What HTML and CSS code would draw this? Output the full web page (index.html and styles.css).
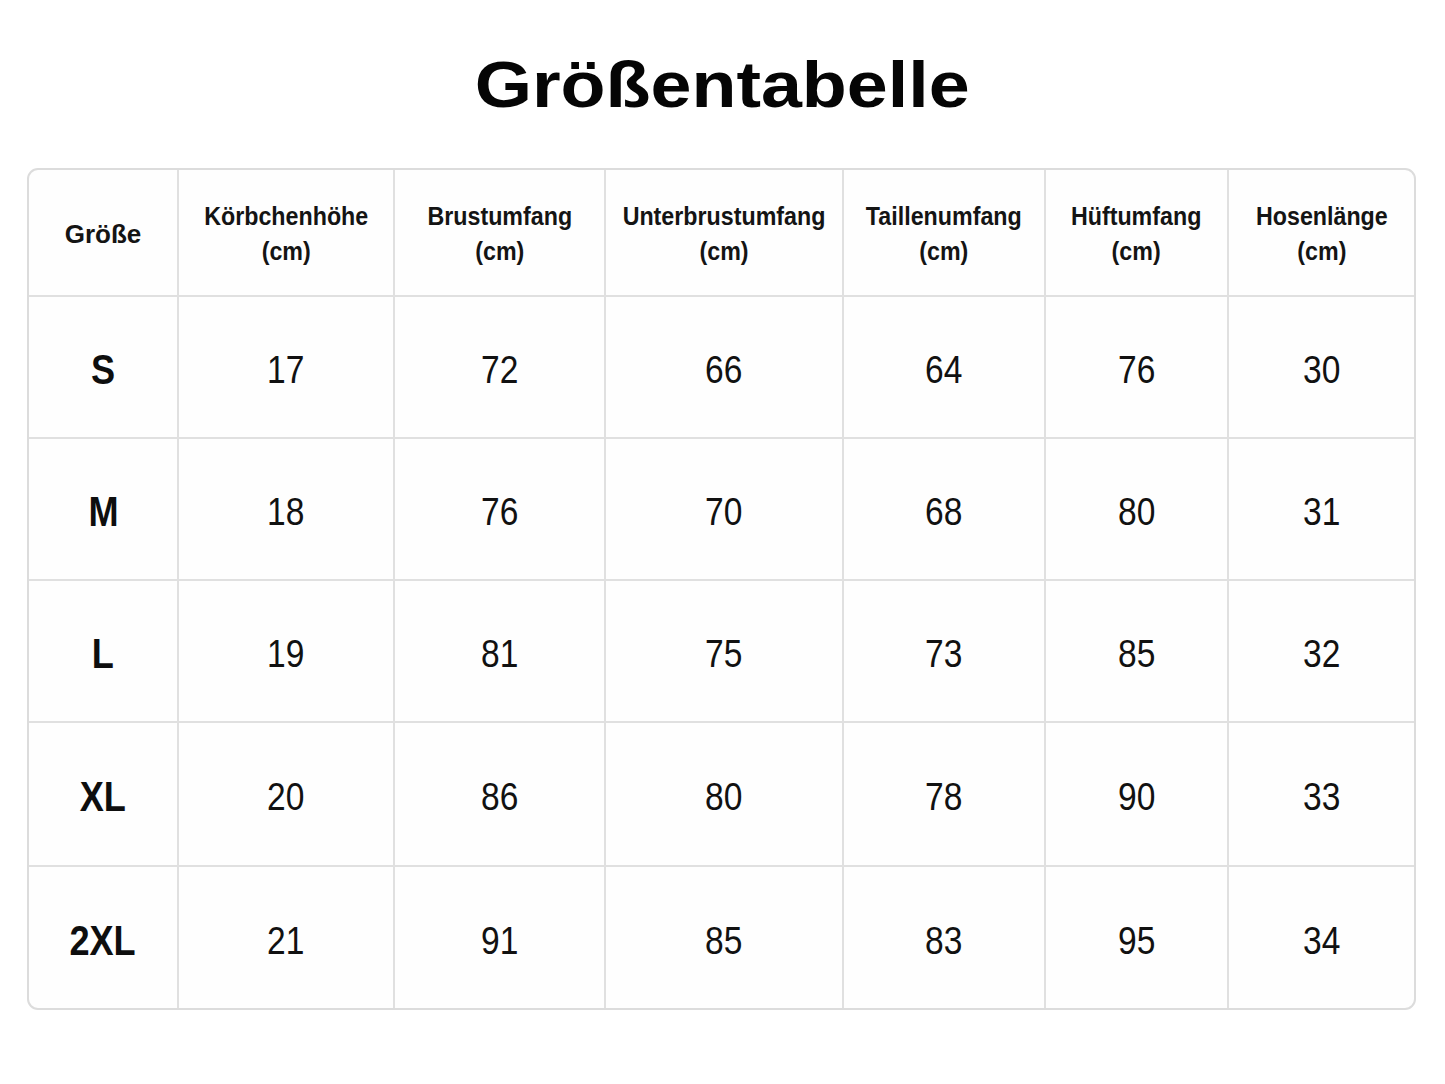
FILE: index.html
```html
<!DOCTYPE html>
<html lang="de">
<head>
<meta charset="utf-8">
<title>Größentabelle</title>
<link rel="stylesheet" href="styles.css">
</head>
<body>
<h1 class="title"><span class="title-text">Größentabelle</span></h1>
<div class="table-wrap">
<table class="sizes">
<colgroup>
<col class="c1"><col class="c2"><col class="c3"><col class="c4"><col class="c5"><col class="c6"><col class="c7">
</colgroup>
<thead>
<tr>
<th><span class="hd h-first">Größe</span></th>
<th><span class="hd">Körbchenhöhe<br>(cm)</span></th>
<th><span class="hd">Brustumfang<br>(cm)</span></th>
<th><span class="hd">Unterbrustumfang<br>(cm)</span></th>
<th><span class="hd">Taillenumfang<br>(cm)</span></th>
<th><span class="hd">Hüftumfang<br>(cm)</span></th>
<th><span class="hd">Hosenlänge<br>(cm)</span></th>
</tr>
</thead>
<tbody>
<tr class="r1"><td><span class="lbl">S</span></td><td><span class="num">17</span></td><td><span class="num">72</span></td><td><span class="num">66</span></td><td><span class="num">64</span></td><td><span class="num">76</span></td><td><span class="num">30</span></td></tr>
<tr class="r2"><td><span class="lbl">M</span></td><td><span class="num">18</span></td><td><span class="num">76</span></td><td><span class="num">70</span></td><td><span class="num">68</span></td><td><span class="num">80</span></td><td><span class="num">31</span></td></tr>
<tr class="r3"><td><span class="lbl">L</span></td><td><span class="num">19</span></td><td><span class="num">81</span></td><td><span class="num">75</span></td><td><span class="num">73</span></td><td><span class="num">85</span></td><td><span class="num">32</span></td></tr>
<tr class="r4"><td><span class="lbl">XL</span></td><td><span class="num">20</span></td><td><span class="num">86</span></td><td><span class="num">80</span></td><td><span class="num">78</span></td><td><span class="num">90</span></td><td><span class="num">33</span></td></tr>
<tr class="r5"><td><span class="lbl">2XL</span></td><td><span class="num">21</span></td><td><span class="num">91</span></td><td><span class="num">85</span></td><td><span class="num">83</span></td><td><span class="num">95</span></td><td><span class="num">34</span></td></tr>
</tbody>
</table>
</div>
</body>
</html>
```
FILE: styles.css
```css
html, body {
  margin: 0;
  padding: 0;
  background: #ffffff;
}
body {
  font-family: "Liberation Sans", Arial, sans-serif;
  color: #111111;
  width: 1445px;
}
.title {
  margin: 54px 0 0 0;
  height: 63px;
  font-size: 64px;
  line-height: 63px;
  font-weight: bold;
  text-align: center;
  color: #050505;
}
.title-text {
  display: inline-block;
  transform: scaleX(1.15);
}
.table-wrap {
  margin: 51px 0 0 27px;
  width: 1389px;
  box-sizing: border-box;
  border: 2px solid #dcdcdc;
  border-radius: 11px;
  overflow: hidden;
  background: #fefefe;
}
.sizes {
  width: 100%;
  border-collapse: separate;
  border-spacing: 0;
  table-layout: fixed;
}
.c1 { width: 150px; }
.c2 { width: 216px; }
.c3 { width: 211px; }
.c4 { width: 238px; }
.c5 { width: 202px; }
.c6 { width: 183px; }
.c7 { width: auto; }
.sizes th, .sizes td {
  border-right: 2px solid #e0e0e0;
  border-bottom: 2px solid #e0e0e0;
  text-align: center;
  vertical-align: middle;
  padding: 0;
}
.sizes th:last-child, .sizes td:last-child {
  border-right: none;
}
.sizes tbody tr:last-child td {
  border-bottom: none;
}
.sizes thead tr {
  height: 127px;
}
.sizes th {
  font-weight: bold;
  color: #141414;
  padding-top: 3px;
}
.hd {
  display: inline-block;
  font-size: 25px;
  line-height: 35px;
  transform: scaleX(0.93);
  white-space: nowrap;
}
.hd.h-first {
  font-size: 26px;
  transform: none;
}
.sizes td {
  padding-top: 6px;
}
.r1, .r2, .r3 { height: 142px; }
.r4 { height: 144px; }
.r5 { height: 141px; }
.num {
  display: inline-block;
  font-size: 39px;
  line-height: 40px;
  transform: scaleX(0.86);
  color: #111111;
}
.lbl {
  display: inline-block;
  font-size: 42px;
  line-height: 42px;
  font-weight: bold;
  transform: scaleX(0.86);
  color: #0e0e0e;
}
```
